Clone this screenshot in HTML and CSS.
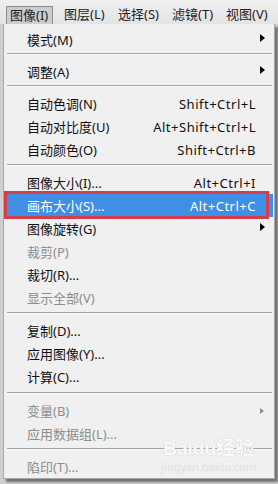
FILE: index.html
```html
<!DOCTYPE html>
<html lang="zh-cn">

<head>
    <meta charset="utf-8" />
    <title>图像菜单</title>
    <link rel="stylesheet" href="styles.css">
</head>

<body>
    <div class="menubar">
        <span class="top-item active">图像(I)</span>
        <span class="top-item">图层(L)</span>
        <span class="top-item">选择(S)</span>
        <span class="top-item">滤镜(T)</span>
        <span class="top-item">视图(V)</span>
    </div>

    <div class="menu">
        <div class="item"><span>模式(M)</span><i class="arrow"></i></div>
        <div class="sep tight"></div>
        <div class="item"><span>调整(A)</span><i class="arrow"></i></div>
        <div class="sep tight"></div>
        <div class="item"><span>自动色调(N)</span><span class="key">Shift+Ctrl+L</span></div>
        <div class="item"><span>自动对比度(U)</span><span class="key">Alt+Shift+Ctrl+L</span></div>
        <div class="item"><span>自动颜色(O)</span><span class="key">Shift+Ctrl+B</span></div>
        <div class="sep"></div>
        <div class="item"><span>图像大小(I)...</span><span class="key">Alt+Ctrl+I</span></div>
        <div class="item selected"><span>画布大小(S)...</span><span class="key">Alt+Ctrl+C</span></div>
        <div class="item"><span>图像旋转(G)</span><i class="arrow"></i></div>
        <div class="item disabled"><span>裁剪(P)</span></div>
        <div class="item"><span>裁切(R)...</span></div>
        <div class="item disabled"><span>显示全部(V)</span></div>
        <div class="sep"></div>
        <div class="item"><span>复制(D)...</span></div>
        <div class="item"><span>应用图像(Y)...</span></div>
        <div class="item"><span>计算(C)...</span></div>
        <div class="sep loose"></div>
        <div class="item disabled"><span>变量(B)</span><i class="arrow small"></i></div>
        <div class="item disabled"><span>应用数据组(L)...</span></div>
        <div class="sep"></div>
        <div class="item disabled"><span>陷印(T)...</span></div>

        <div class="watermark">
            <div class="wm-logo">Bai<span class="paw">du</span>经验</div>
            <div class="wm-url">jingyan.baidu.com</div>
        </div>
    </div>
</body>

</html>
```

FILE: styles.css
```css
body {
    margin: 0;
    width: 278px;
    height: 484px;
    overflow: hidden;
    background-color: #cfcfcf;
    font-family: 'Noto Sans', 'Noto Sans CJK SC', sans-serif;
    font-size: 13px;
    color: #111;
}

.menubar {
    height: 24px;
    box-sizing: border-box;
    padding: 6px 0 0 6px;
    display: flex;
    align-items: flex-end;
    background: linear-gradient(#f0f0f0, #e4e4e4);
}

.top-item {
    width: 47px;
    height: 18px;
    box-sizing: border-box;
    margin-right: 7px;
    padding-left: 4px;
    line-height: 17px;
    color: #222;
    white-space: nowrap;
}

.top-item.active {
    background-color: #cdcdcd;
    border: 1px solid #8f8f8f;
    border-bottom: none;
    padding-left: 3px;
}

.menu {
    position: relative;
    width: 272px;
    margin-left: 3px;
    box-sizing: border-box;
    padding: 4px 0 0;
    background-color: #f0f0f0;
    border: 1px solid #a9a9a9;
    border-top: none;
    box-shadow: 3px 3px 2px rgba(0, 0, 0, .45);
}

.item {
    position: relative;
    height: 23px;
    display: flex;
    align-items: center;
    padding: 0 18px 0 23px;
    white-space: nowrap;
}

.item .key {
    margin-left: auto;
    letter-spacing: .5px;
}

.item.disabled {
    color: #8c8c8c;
}

.item.selected {
    margin: 0 1px;
    padding-left: 22px;
    padding-right: 17px;
    background-color: #3f8fe7;
    color: #fff;
}

.item.selected::after {
    content: '';
    position: absolute;
    left: -1px;
    top: -3px;
    right: 4px;
    bottom: -2px;
    border: 3px solid #d23f4b;
}

.arrow {
    margin-left: auto;
    margin-right: -9px;
    margin-bottom: 4px;
    width: 0;
    height: 0;
    border-left: 5px solid #000;
    border-top: 4.5px solid transparent;
    border-bottom: 4.5px solid transparent;
}

.arrow.small {
    margin-right: -8px;
    margin-bottom: 0;
    border-left: 4px solid #8c8c8c;
    border-top: 3px solid transparent;
    border-bottom: 3px solid transparent;
}

.sep {
    height: 1px;
    margin: 3px 2px 5px 3px;
    background-color: #a4a4a4;
    border-bottom: 1px solid #fbfbfb;
}

.sep.tight {
    margin-top: 2px;
    margin-bottom: 5px;
}

.sep.loose {
    margin-top: 4px;
    margin-bottom: 5px;
}

.watermark {
    position: absolute;
    left: 157px;
    top: 414px;
    text-align: center;
    pointer-events: none;
}

.wm-logo {
    font-family: 'Liberation Sans', 'Noto Sans CJK SC', sans-serif;
    font-size: 19px;
    font-weight: bold;
    line-height: 22px;
    color: #fafafa;
    text-shadow: 0 0 1px #b9b9b9;
}

.wm-url {
    font-size: 11px;
    line-height: 14px;
    color: #e0e0e0;
}
```
